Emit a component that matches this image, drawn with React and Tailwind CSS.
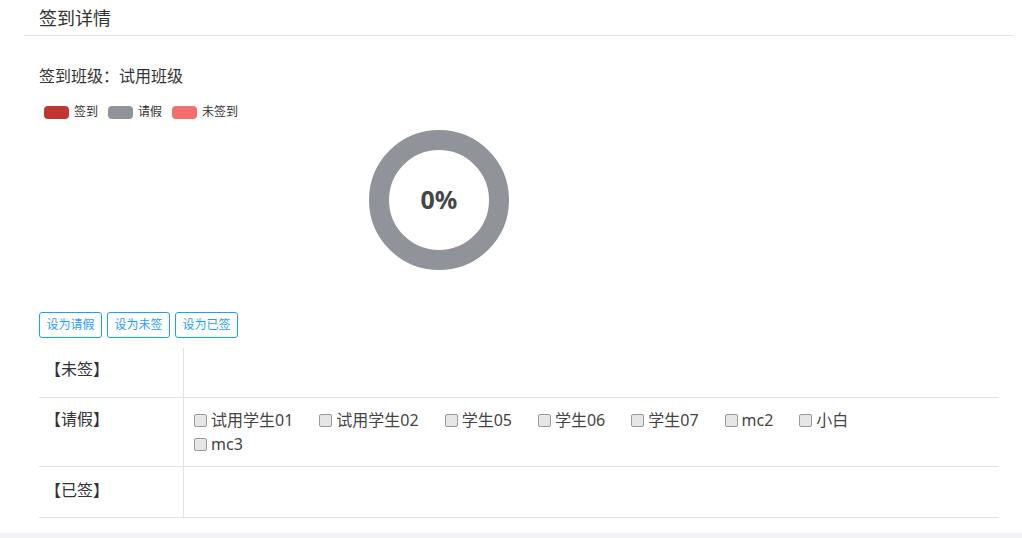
import React from "react";

const legend = [
  { label: "签到", color: "bg-[#c23531]" },
  { label: "请假", color: "bg-[#909399]" },
  { label: "未签到", color: "bg-[#f36f6f]" },
];

const students = ["试用学生01", "试用学生02", "学生05", "学生06", "学生07", "mc2", "小白", "mc3"];

const Donut = () => (
  <div className="relative w-[142px] h-[142px]">
    <svg width="142" height="142" viewBox="0 0 142 142">
      <circle cx="71" cy="71" r="60" fill="none" stroke="#909399" strokeWidth="20" />
    </svg>
    <div className="absolute inset-0 flex items-center justify-center text-[25px] font-bold text-[#464646]">
      0%
    </div>
  </div>
);

const App = () => {
  return (
    <div
      className="w-[1022px] h-[538px] bg-[#f3f3f6] flex flex-col"
      style={{ fontFamily: '"Noto Sans", "Noto Sans CJK SC", sans-serif' }}
    >
      <div className="bg-white h-[533px] text-[#333]">
        {/* Title */}
        <div className="ml-[24px] mr-[9px] border-b border-[#e2e2e2] h-[36px] pl-[15px] pt-[6px]">
          <h2 className="text-[18px] leading-[24px] text-[#333]">签到详情</h2>
        </div>

        <div className="px-[39px] pr-[23px]">
          <p className="mt-[28px] text-[16px] leading-[24px]">签到班级：试用班级</p>

          {/* Legend */}
          <div className="flex items-center mt-[17px] ml-[5px] text-[12px] leading-[14px]">
            {legend.map((l) => (
              <div key={l.label} className="flex items-center mr-[10px]">
                <span className={`w-[25px] h-[13px] rounded-[4px] ${l.color}`} />
                <span className="ml-[5px] text-[#333]">{l.label}</span>
              </div>
            ))}
          </div>

          {/* Chart */}
          <div className="h-[193px] flex items-start pl-[329px]">
            <div className="mt-[10px]">
              <Donut />
            </div>
          </div>

          {/* Buttons */}
          <div className="flex gap-[5px]">
            {["设为请假", "设为未签", "设为已签"].map((b) => (
              <button
                key={b}
                className="h-[26px] w-[63px] border border-[#1e9fff] rounded-[3px] text-[12px] text-[#1e9fff] bg-white"
              >
                {b}
              </button>
            ))}
          </div>

          {/* Table */}
          <div className="mt-[10px] w-[960px] text-[16px]">
            <div className="flex h-[50px] border-b border-[#e2e2e2]">
              <div className="w-[145px] border-r border-[#e2e2e2] pl-[6px] pt-[10px] leading-[22px]">【未签】</div>
              <div className="flex-1" />
            </div>
            <div className="flex h-[69px] border-b border-[#e2e2e2]">
              <div className="w-[145px] border-r border-[#e2e2e2] pl-[6px] pt-[10px] leading-[22px]">【请假】</div>
              <div className="flex-1 pl-[10px] pt-[10px]">
                <div className="flex flex-wrap w-[700px] text-[16px] leading-[24px] text-[#444]">
                  {students.map((s) => (
                    <label key={s} className="flex items-center mr-[26px]">
                      <span className="w-[13px] h-[13px] rounded-[2px] border border-[#9a9a9a] bg-[#e6e6e6] mr-[4px]" />
                      {s}
                    </label>
                  ))}
                </div>
              </div>
            </div>
            <div className="flex h-[51px] border-b border-[#e2e2e2]">
              <div className="w-[145px] border-r border-[#e2e2e2] pl-[6px] pt-[12px] leading-[22px]">【已签】</div>
              <div className="flex-1" />
            </div>
          </div>
        </div>
      </div>
    </div>
  );
};

export default App;
